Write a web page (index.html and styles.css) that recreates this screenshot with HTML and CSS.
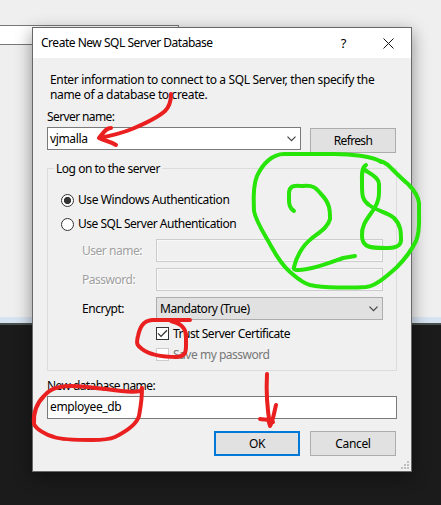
FILE: index.html
```
<!DOCTYPE html>
<html lang="en">
<head>
<meta charset="utf-8">
<title>Create New SQL Server Database</title>
<link rel="stylesheet" href="styles.css">
</head>
<body>
<div class="desktop">
  <div class="app"><div class="app-field"></div></div>
  <div class="app-status"></div>
  <div class="app-edge"></div>
</div>
<main class="dialog">
  <header class="titlebar">
    <span class="title">Create New SQL Server Database</span>
    <span class="help">?</span>
    <svg class="close" width="11" height="11" viewBox="0 0 11 11"><path d="M.5.5l10 10M10.5.5l-10 10"/></svg>
  </header>
  <div class="content">
    <p class="intro">Enter information to connect to a SQL Server, then specify the name of a database to create.</p>
    <div class="label server-label">Server name:</div>
    <div class="server-row">
      <div class="combo server"><span class="value">vjmalla</span><svg class="chevron" width="9" height="6" viewBox="0 0 9 6"><path d="M.5.7l4 4 4-4"/></svg></div>
      <div class="button refresh">Refresh</div>
    </div>
    <section class="group">
      <div class="legend"><span>Log on to the server</span></div>
      <div class="radio-row"><i class="radio checked"></i><span class="windows-auth">Use Windows Authentication</span></div>
      <div class="radio-row"><i class="radio"></i><span>Use SQL Server Authentication</span></div>
      <div class="form">
        <span class="disabled-label">User name:</span><div class="disabled-field"></div>
        <span class="disabled-label">Password:</span><div class="disabled-field"></div>
        <span>Encrypt:</span>
        <div class="combo select"><span>Mandatory (True)</span><svg class="chevron" width="9" height="6" viewBox="0 0 9 6"><path d="M.5.7l4 4 4-4"/></svg></div>
      </div>
      <div class="check-row"><i class="check"><svg width="11" height="11" viewBox="0 0 11 11"><path d="M1 5.4l3 3 6-6.2"/></svg></i><span>Trust Server Certificate</span></div>
      <div class="check-row off"><i class="check"></i><span>Save my password</span></div>
    </section>
    <div class="label db-label">New database name:</div>
    <div class="text-field">employee_db</div>
    <div class="actions">
      <div class="button primary">OK</div>
      <div class="button cancel">Cancel</div>
    </div>
  </div>
  <svg class="grip" width="8" height="8" viewBox="0 0 8 8"><path d="M6 0h2v2H6zM3 3h2v2H3zM6 3h2v2H6zM0 6h2v2H0zM3 6h2v2H3zM6 6h2v2H6z"/></svg>
</main>
<svg class="ink" width="441" height="505" viewBox="0 0 441 505">
  <g class="red">
    <path d="M171 94C171 102 169 107 165 111C156 119 144 124 132 129C122 133 110 136 99 138M111 128C106 128 104 132 99 138C105 141 110 141 116 145"/>
    <path d="M190 320L152 320C143 321 140 327 138 336C136 344 137 345 142 349C151 356 166 357 177 357C184 356 186 354 186 346L186 334C184 325 178 323 171 321"/>
    <path d="M141 391L142 388C142 401 140 410 139 416C137 423 127 431 115 437C108 440 99 440 92 440C76 440 62 440 54 437C46 435 36 429 34 424C33 412 38 402 44 396C49 390 54 388 60 387C75 384 92 388 106 389C119 391 131 393 140 391"/>
    <path d="M267 374C266 392 267 408 270 425M260 419C265 420 270 419 273 422M276 405C274 413 273 421 270 426L268 419L272 420"/>
  </g>
  <g class="green">
    <path d="M381 162C373 156 350 154 334 154L284 154C273 154 263 163 257 176C252 188 254 205 254 211C256 222 265 235 271 246C277 257 282 265 290 272C297 278 302 283 310 285C324 288 352 288 366 287C376 286 388 275 397 267C404 260 412 249 416 241C420 232 419 222 419 213L419 203C418 195 414 190 408 184C402 179 396 173 391 168C387 163 383 162 380 161"/>
    <path d="M294 211C288 207 289 201 289 194C289 184 296 186 303 186C314 185 316 188 321 194C331 204 330 213 330 219C328 228 318 233 311 239C302 246 296 258 294 267C293 270 296 270 299 270C312 270 329 263 343 258L355 256"/>
    <path d="M366 165C361 168 362 176 362 184C362 195 362 200 369 205C377 211 387 212 394 218C401 225 401 232 401 240C401 247 394 248 385 248C372 248 362 248 362 236C361 225 368 218 374 209C380 200 379 193 379 184C379 178 372 175 365 170"/>
  </g>
</svg>
</body>
</html>
```
FILE: styles.css
```
* { box-sizing: border-box; }
body {
  margin: 0;
  width: 441px;
  height: 505px;
  position: relative;
  overflow: hidden;
  font: 12px/16px "Noto Sans", "Open Sans", sans-serif;
  letter-spacing: -0.48px;
  color: #000;
  background: #1b1b1b;
}
span { white-space: nowrap; }
.desktop { height: 505px; }
.app { height: 317px; padding-top: 25px; background: #efefef; }
.app-field { width: 179px; height: 20px; background: #fff; border: 1px solid #777; border-left: 0; }
.app-status { height: 6px; background: #d7e3f1; }
.app-edge { height: 2px; background: #4a504e; }
.dialog {
  position: absolute;
  left: 32px;
  top: 27px;
  width: 380px;
  height: 445px;
  border: 1px solid #686868;
  background: #f0f0f0;
  box-shadow: 0 5px 16px rgba(0, 0, 0, .42);
}
.titlebar { height: 30px; display: flex; align-items: center; padding: 0 17px 0 8px; background: #fff; }
.help { margin-left: auto; margin-right: 37px; font-size: 13px; }
.close { fill: none; stroke: #111; }
.content { padding: 14px 14px 0; }
.intro { margin: 0 0 0 3px; line-height: 15px; width: 335px; letter-spacing: -0.35px; }
.label { height: 16px; }
.server-label { margin-top: 7px; letter-spacing: -0.6px; }
.server-row { display: flex; gap: 9px; margin-top: 2px; }
.combo { display: flex; align-items: center; justify-content: space-between; height: 23px; border: 1px solid #7a7a7a; background: #fff; padding: 0 4px 0 2px; }
.server { width: 254px; }
.value { letter-spacing: -0.35px; }
.chevron { fill: none; stroke: #444; stroke-width: 1.2; }
.button { width: 86px; height: 25px; display: flex; align-items: center; justify-content: center; background: #e1e1e1; border: 1px solid #adadad; }
.refresh { margin-top: 1px; letter-spacing: -0.65px; }
.cancel { letter-spacing: -0.35px; }
.group { height: 203px; margin-top: 15px; border: 1px solid #dcdcdc; width: 350px; }
.legend { height: 16px; margin: -8px 0 0 6px; }
.legend span { display: inline-block; background: #f0f0f0; padding: 0 2px; }
.radio-row { display: flex; align-items: center; gap: 4px; height: 24px; padding-left: 13px; }
.legend + .radio-row { margin-top: 11px; }
.radio { width: 13px; height: 13px; border: 1px solid #333; border-radius: 50%; background: #fff; }
.checked { background: radial-gradient(circle, #333 0 3.3px, #fff 3.9px); }
.windows-auth { letter-spacing: -0.4px; }
.form { display: grid; grid-template-columns: 74px 227px; grid-auto-rows: 23px; row-gap: 6px; align-items: center; margin: 3px 0 0 34px; }
.disabled-label { color: #a0a0a0; text-shadow: 1px 1px #fff; }
.disabled-field { height: 23px; border: 1px solid #ccc; background: #f0f0f0; box-shadow: inset 0 0 0 1px #f8f8f8; }
.select { background: #e1e1e1; border-color: #adadad; padding-left: 3px; }
.check-row { display: flex; align-items: center; gap: 4px; height: 21px; margin-left: 108px; }
.form + .check-row { margin-top: 3px; }
.check { display: flex; width: 13px; height: 13px; border: 1px solid #333; background: #fff; }
.check svg { fill: none; stroke: #333; stroke-width: 1.3; }
.off { color: #777; }
.off .check { border-color: #ccc; }
.db-label { margin-top: 7px; letter-spacing: -0.58px; }
.text-field { width: 350px; height: 23px; margin-top: 2px; border: 1px solid #7a7a7a; background: #fff; padding: 2px; letter-spacing: -0.35px; }
.actions { display: flex; justify-content: flex-end; gap: 10px; margin: 12px 1px 0 0; }
.primary { border: 2px solid #0078d7; }
.grip { position: absolute; right: 2px; bottom: 2px; fill: #bfbfbf; }
.ink { position: absolute; left: 0; top: 0; fill: none; stroke-width: 4; stroke-linecap: round; stroke-linejoin: round; pointer-events: none; }
.red { stroke: #e9201f; }
.green { stroke: #27e508; }
```
